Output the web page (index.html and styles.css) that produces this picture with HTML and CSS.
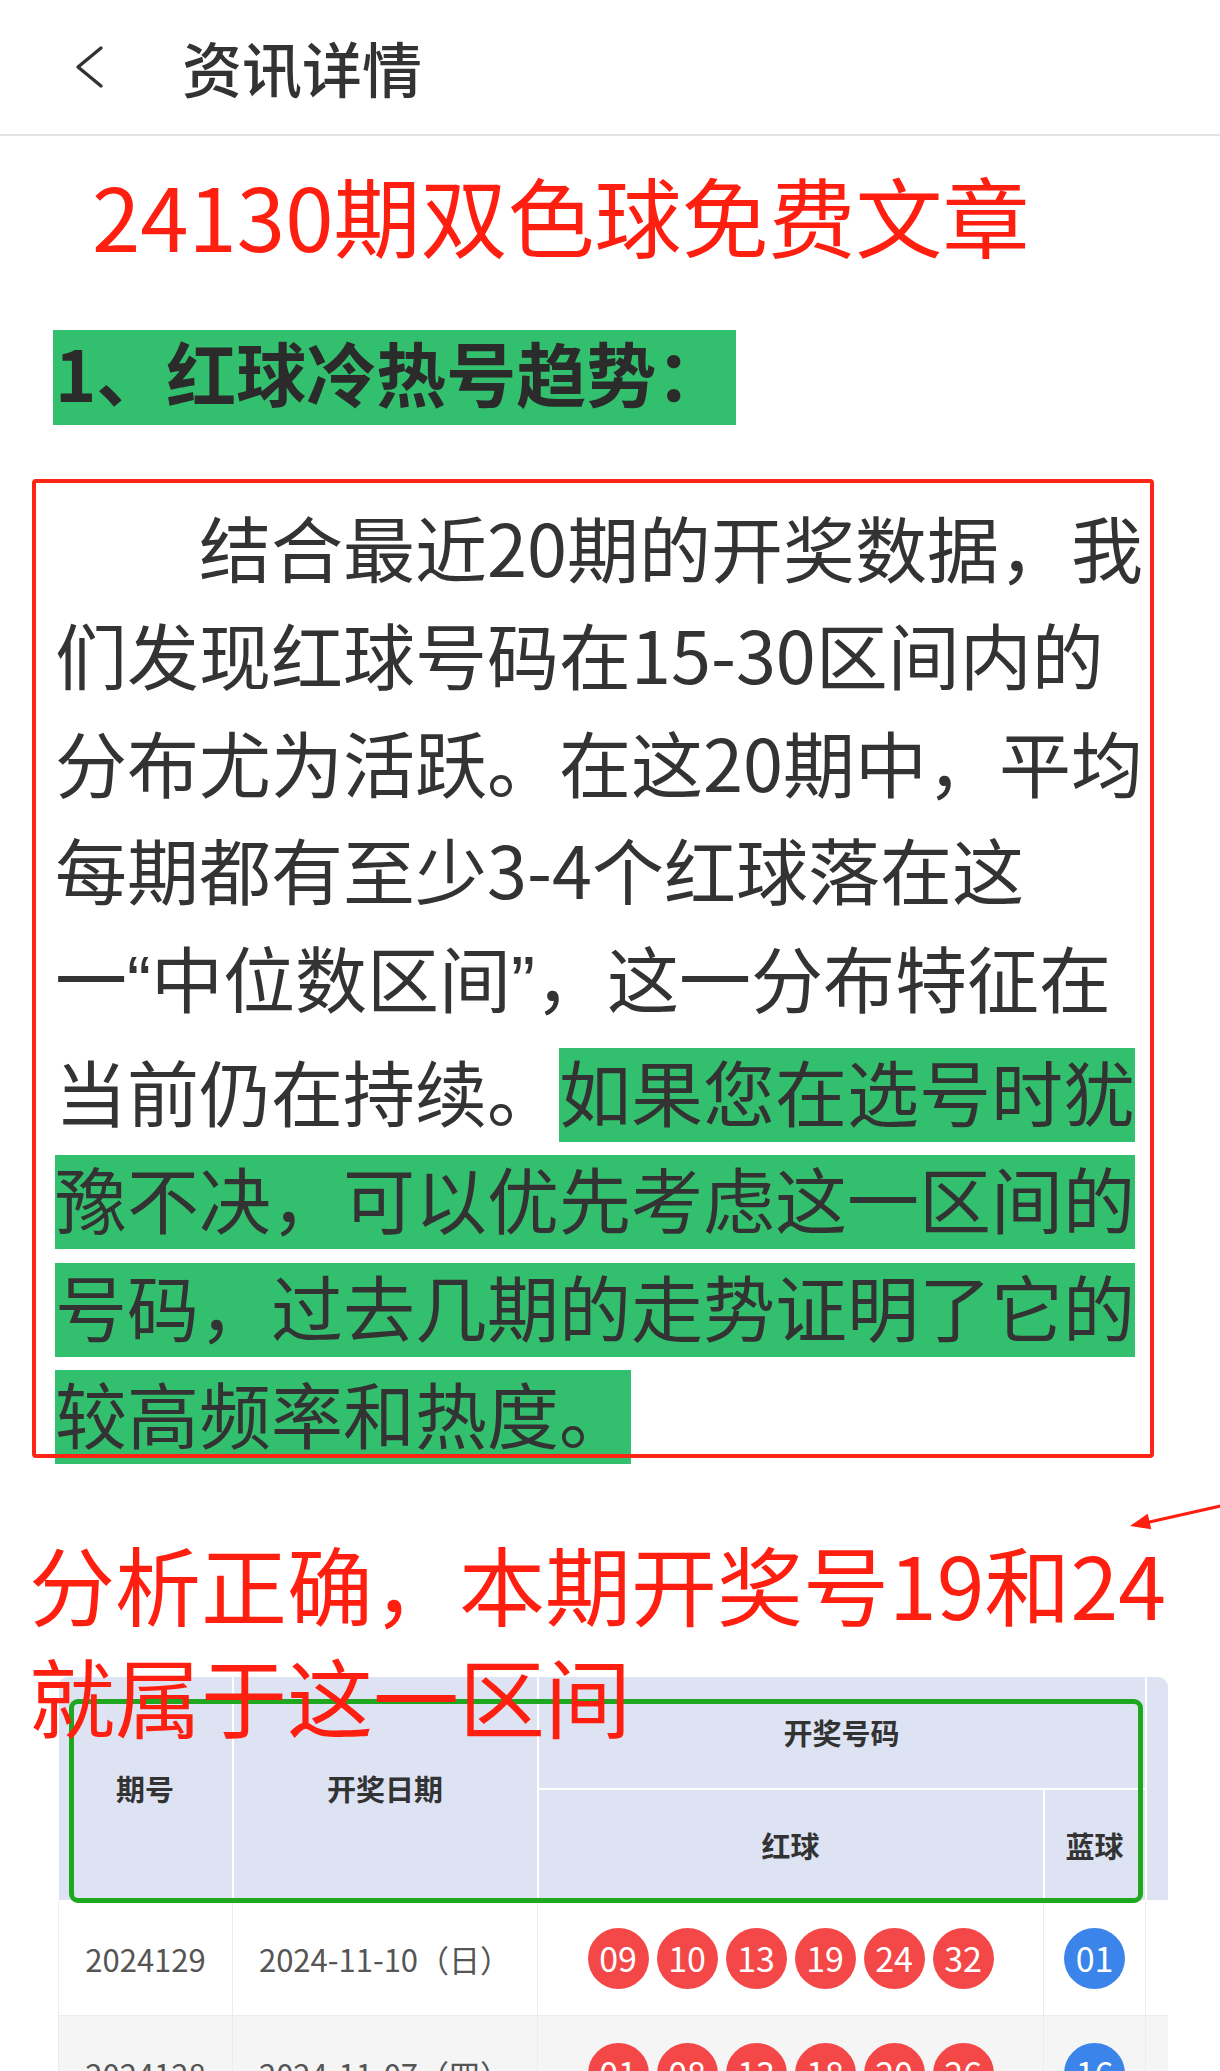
FILE: index.html
```html
<!DOCTYPE html>
<html lang="zh-CN">
<head>
<meta charset="utf-8">
<title>资讯详情</title>
<link rel="stylesheet" href="styles.css">
</head>
<body>
<header class="topbar">
  <svg class="back" viewBox="0 0 34 44" aria-hidden="true"><polyline points="29,3 6,22 29,41" fill="none" stroke="#333" stroke-width="3.4" stroke-linecap="round" stroke-linejoin="round"/></svg>
  <h1 class="page-title">资讯详情</h1>
</header>
<main class="content">
  <h2 class="article-title">24130期双色球免费文章</h2>
  <h3 class="section"><span class="section-mark">1、红球冷热号趋势：</span></h3>
  <div class="para-wrap">
    <p class="para">　　结合最近20期的开奖数据，我<br>们发现红球号码在15-30区间内的<br>分布尤为活跃。在这20期中，平均<br>每期都有至少3-4个红球落在这<br>一<span class="q">“</span>中位数区间<span class="q">”</span>，这一分布特征在<br>当前仍在持续。<span class="hl">如果您在选号时犹<br>豫不决，可以优先考虑这一区间的<br>号码，过去几期的走势证明了它的<br>较高频率和热度。</span></p>
    <div class="red-frame"></div>
  </div>
  <div class="note-wrap">
    <p class="note">分析正确，本期开奖号19和24<br>就属于这一区间</p>
    <svg class="arrow" viewBox="0 0 95 40" aria-hidden="true">
      <line x1="96" y1="9" x2="20" y2="26" stroke="#ff1f10" stroke-width="3.2"/>
      <polygon points="5,29 26.3,32.3 22.7,16.7" fill="#ff1f10"/>
    </svg>
  </div>
  <div class="table-wrap">
    <table class="draws">
      <colgroup><col class="c1"><col class="c2"><col class="c3"><col class="c4"><col class="c5"></colgroup>
      <thead>
        <tr class="h1"><th rowspan="2">期号</th><th rowspan="2">开奖日期</th><th colspan="2" class="grp">开奖号码</th><th rowspan="2"></th></tr>
        <tr class="h2"><th>红球</th><th>蓝球</th></tr>
      </thead>
      <tbody>
        <tr>
          <td>2024129</td><td>2024-11-10（日）</td>
          <td><div class="balls"><span class="ball red">09</span><span class="ball red">10</span><span class="ball red">13</span><span class="ball red">19</span><span class="ball red">24</span><span class="ball red">32</span></div></td>
          <td><div class="balls"><span class="ball blue">01</span></div></td><td></td>
        </tr>
        <tr class="alt">
          <td>2024128</td><td>2024-11-07（四）</td>
          <td><div class="balls"><span class="ball red">01</span><span class="ball red">08</span><span class="ball red">13</span><span class="ball red">18</span><span class="ball red">20</span><span class="ball red">26</span></div></td>
          <td><div class="balls"><span class="ball blue">16</span></div></td><td></td>
        </tr>
      </tbody>
    </table>
    <div class="green-frame"></div>
  </div>
</main>
</body>
</html>
```
FILE: styles.css
```css
* { box-sizing: border-box; }
html, body { margin: 0; padding: 0; }
body {
  width: 1220px;
  background: #fff;
  font-family: "Noto Sans CJK SC", "Noto Sans", sans-serif;
  color: #333;
  overflow: hidden;
}
.topbar {
  height: 136px;
  border-bottom: 2px solid #e3e3e3;
  display: flex;
  align-items: center;
  padding-left: 72px;
}
.back { width: 34px; height: 44px; display: block; }
.page-title {
  margin: 0 0 0 76px;
  font-size: 60px;
  font-weight: 500;
  line-height: 1;
  color: #333;
}
.content { padding: 0; }
.article-title {
  margin: 27px 0 0 92px;
  font-size: 87px;
  line-height: 103px;
  font-weight: 400;
  color: #ff1f10;
}
.section { margin: 55px 0 0 53px; font-size: 70px; font-weight: 700; }
.section-mark {
  display: inline-block;
  height: 95px;
  line-height: 83px;
  padding: 0 10px 12px 2px;
  background: #33c06e;
  color: #2b2b2b;
}
.para-wrap { position: relative; margin: 67px 0 0 55px; width: 1110px; }
.para {
  margin: 0;
  font-size: 72px;
  line-height: 107.4px;
  white-space: nowrap;
  color: #333;
}
.q { font-family: "Liberation Sans", sans-serif; }
.hl {
  background: linear-gradient(to bottom, transparent 11px, #33c06e 11px);
  -webkit-box-decoration-break: clone;
  box-decoration-break: clone;
}
.red-frame {
  position: absolute;
  left: -23px;
  top: -13px;
  width: 1122px;
  bottom: 8px;
  border: 4px solid #ff2414;
  border-radius: 4px;
  pointer-events: none;
}
.note-wrap { position: relative; z-index: 2; margin-top: 61px; margin-bottom: -74px; }
.note {
  margin: 0 0 0 29px;
  font-size: 86px;
  line-height: 112px;
  color: #ff1f10;
  white-space: nowrap;
}
.arrow { position: absolute; left: 1125px; top: -30px; width: 95px; height: 40px; }
.table-wrap {
  position: relative;
  margin-left: 58px;
  width: 1110px;
  overflow: hidden;
  border-radius: 10px 10px 0 0;
}
.draws {
  border-collapse: collapse;
  table-layout: fixed;
  width: 1207px;
}
.c1 { width: 174px; } .c2 { width: 305px; } .c3 { width: 506px; } .c4 { width: 102px; } .c5 { width: 120px; }
.draws th {
  background: #dde3f3;
  font-size: 29px;
  font-weight: 700;
  color: #333;
  padding: 0;
  border: 2px solid #fff;
  border-top: 0;
  text-align: center;
}
.draws th:first-child { border-left: 0; }
.draws tr.h1 th { height: 112px; }
.draws tr.h2 th { height: 112px; }
.draws td {
  height: 115px;
  padding: 0;
  border: 1px solid #ececec;
  text-align: center;
  font-size: 31px;
  color: #555;
  white-space: nowrap;
}
.draws tr.alt td { background: #f5f5f5; }
.balls { display: flex; justify-content: center; gap: 8px; }
.ball {
  width: 61px;
  height: 61px;
  border-radius: 50%;
  display: flex;
  align-items: center;
  justify-content: center;
  color: #fff;
  font-size: 34px;
  line-height: 1;
}
.ball.red { background: #f44848; }
.ball.blue { background: #3a84ea; }
.green-frame {
  position: absolute;
  left: 11px;
  top: 22px;
  width: 1074px;
  height: 204px;
  border: 5px solid #1fa71f;
  border-radius: 9px;
  pointer-events: none;
}
```
